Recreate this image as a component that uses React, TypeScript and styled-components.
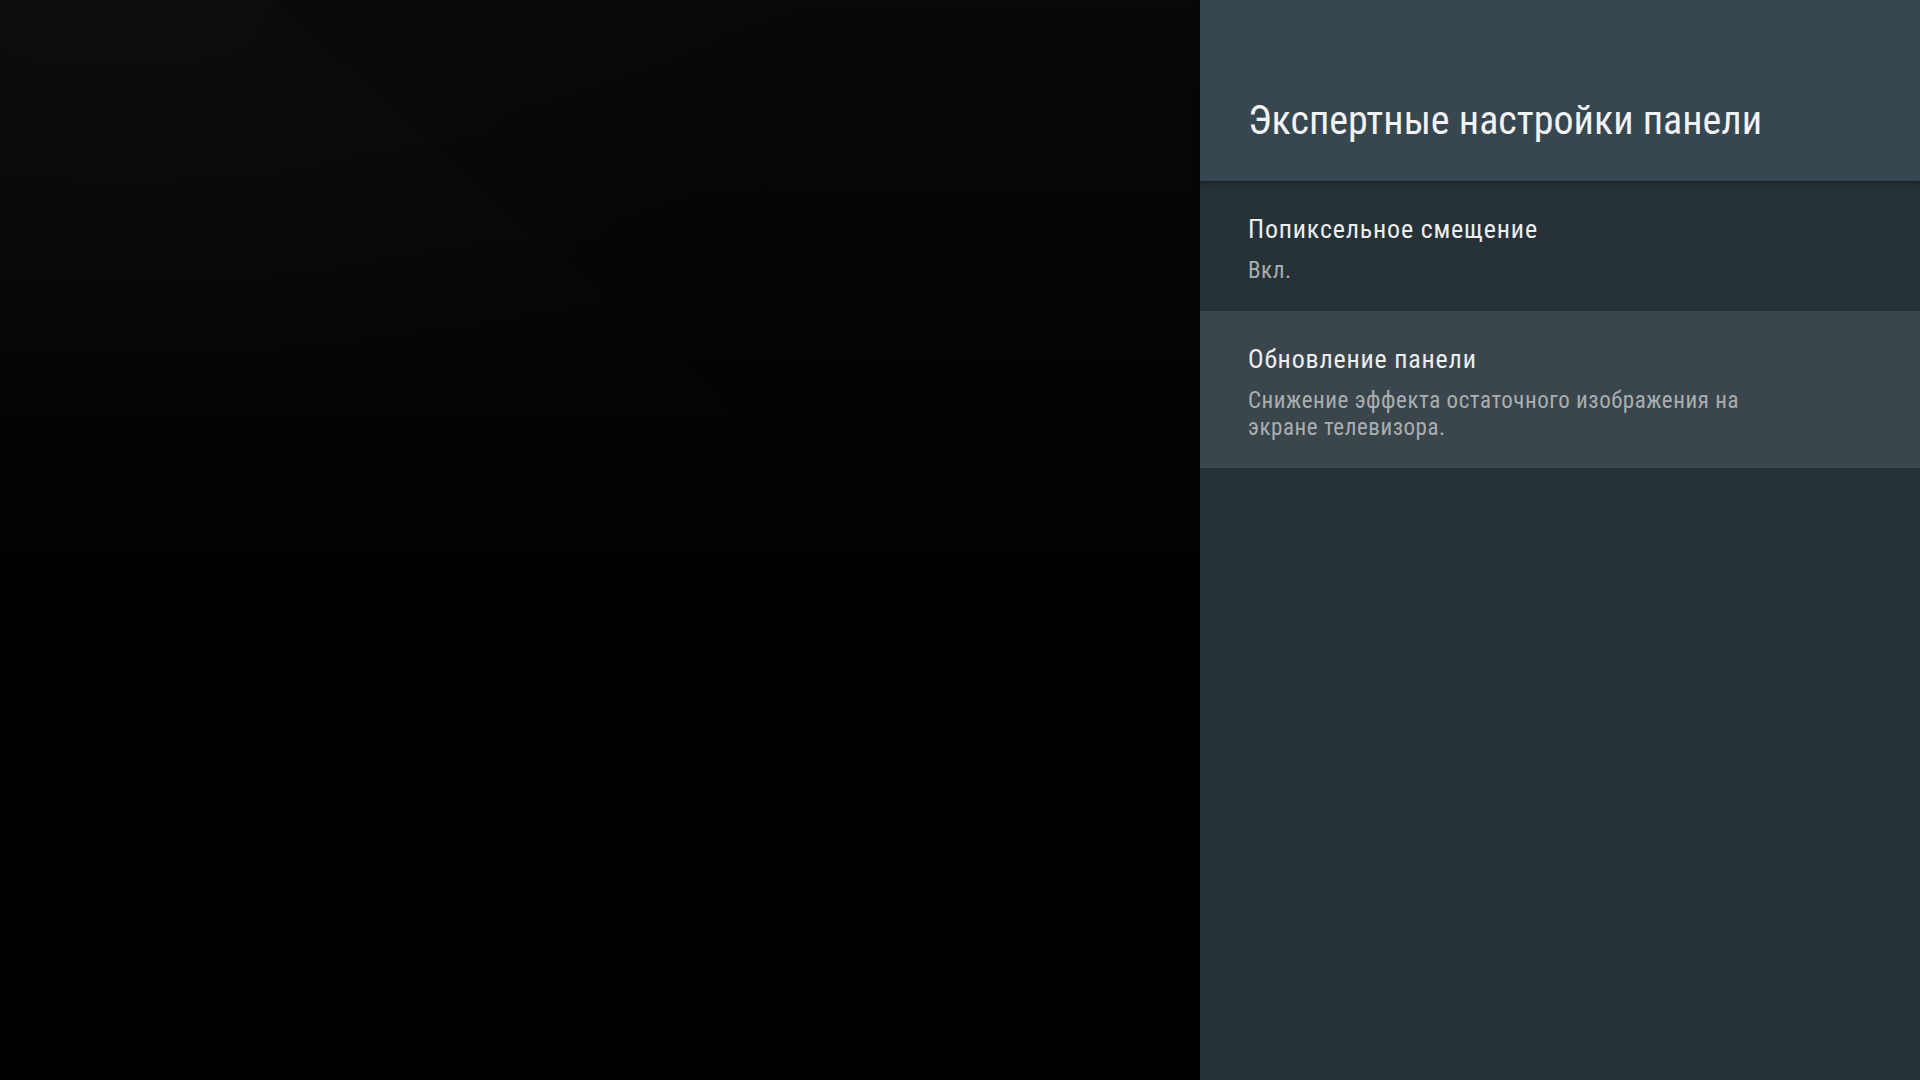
import React from 'react';
import styled, { createGlobalStyle } from 'styled-components';

interface Preference {
  id: string;
  title: string;
  summary: string;
  focused?: boolean;
}

const preferences: Preference[] = [
  { id: 'pixel-shift', title: 'Попиксельное смещение', summary: 'Вкл.' },
  {
    id: 'panel-refresh',
    title: 'Обновление панели',
    summary: 'Снижение эффекта остаточного изображения на экране телевизора.',
    focused: true,
  },
];

const GlobalStyle = createGlobalStyle`
  html, body {
    margin: 0;
    padding: 0;
    width: 100%;
    height: 100%;
    background: #000;
    overflow: hidden;
  }
  #root {
    height: 100%;
  }
`;

const Screen = styled.div`
  display: flex;
  width: 1920px;
  height: 1080px;
  font-family: "Roboto Condensed", "Liberation Sans Narrow", Roboto, sans-serif;
`;

// dimmed wallpaper behind the settings panel
const Backdrop = styled.div`
  flex: 1;
  background:
    linear-gradient(41.6deg, rgba(0, 0, 0, 0) 61.5%, rgba(0, 0, 0, 0.22) 61.6%),
    radial-gradient(ellipse 700px 420px at 10% 0%, rgba(16, 15, 14, 0.6) 0%, rgba(16, 15, 14, 0) 100%),
    linear-gradient(to bottom, #0b0a0a 0%, #070707 22%, #030303 42%, #000 62%, #000 100%);
`;

const Panel = styled.aside`
  display: flex;
  flex-direction: column;
  width: 720px;
  background: #263238;
`;

const Header = styled.header`
  position: relative;
  z-index: 1;
  padding: 97px 48px 36px;
  background: #37474f;
  box-shadow: 0 2px 6px rgba(0, 0, 0, 0.45);
`;

const Title = styled.h1`
  margin: 0;
  font-size: 40px;
  line-height: 48px;
  font-weight: 400;
  color: #f1f3f4;
  white-space: nowrap;
`;

const List = styled.div`
  display: flex;
  flex-direction: column;
`;

const Row = styled.div<{ $focused?: boolean }>`
  padding: 32px 48px 27px;
  background: ${(p) => (p.$focused ? '#3a464c' : 'transparent')};
`;

const RowTitle = styled.div`
  font-size: 26px;
  line-height: 32px;
  letter-spacing: 0.8px;
  color: #eceeef;
`;

const RowSummary = styled.div`
  margin-top: 12px;
  max-width: 545px;
  font-size: 23px;
  line-height: 27px;
  letter-spacing: 0.55px;
  color: #a9aeb1;
`;

export default function App() {
  return (
    <>
      <GlobalStyle />
      <Screen>
        <Backdrop />
        <Panel>
          <Header>
            <Title>Экспертные настройки панели</Title>
          </Header>
          <List>
            {preferences.map((pref) => (
              <Row key={pref.id} $focused={pref.focused}>
                <RowTitle>{pref.title}</RowTitle>
                <RowSummary>{pref.summary}</RowSummary>
              </Row>
            ))}
          </List>
        </Panel>
      </Screen>
    </>
  );
}
